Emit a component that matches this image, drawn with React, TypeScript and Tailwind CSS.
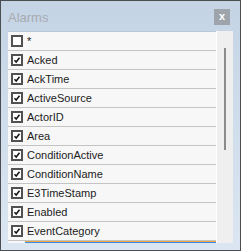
import React from "react"

const fields = [
  "*",
  "Acked",
  "AckTime",
  "ActiveSource",
  "ActorID",
  "Area",
  "ConditionActive",
  "ConditionName",
  "E3TimeStamp",
  "Enabled",
  "EventCategory",
]

function Check({ checked }: { checked: boolean }) {
  return (
    <div className="w-[12px] h-[12px] border-2 border-[#515151] bg-white flex items-center justify-center">
      {checked && (
        <svg width="8" height="8" viewBox="0 0 8 8">
          <path d="M1.5 4.2 L3.2 6 L6.5 1.8" fill="none" stroke="#111" strokeWidth="1.5" />
        </svg>
      )}
    </div>
  )
}

export default function App() {
  return (
    <div className="w-[241px] h-[251px] border border-[#4b4d50] bg-gradient-to-b from-[#c4d4e5] to-[#dce6f2] flex flex-col font-['Liberation_Sans',Arial,sans-serif]">
      <div className="h-[30px] flex items-center justify-between pl-[7px] pr-[10px] pt-[2px]">
        <span className="text-[13px] text-[#a6abb1] leading-none">Alarms</span>
        <div className="w-[16px] h-[16px] bg-[#9da4ab] flex items-center justify-center text-white text-[11px] font-bold leading-none pb-[2px]">
          x
        </div>
      </div>
      <div className="ml-[7px] w-[225px] h-[212px] flex">
        <div className="w-[208px] border-t border-[#b9c7d6] bg-[#f7f7f7] flex flex-col">
          {fields.map((f, i) => (
            <div key={f} className="h-[19px] shrink-0 flex border-b border-[#c4c4c4]">
              <div className="w-[18px] border-r border-[#fdfdfd] flex items-center pl-[3px]">
                <Check checked={i > 0} />
              </div>
              <span className="pl-[1px] text-[11px] leading-[18px] text-[#1c1c1c]">{f}</span>
            </div>
          ))}
          <div className="flex">
            <div className="w-[17px]" />
            <div className="flex-1">
              <div className="h-px bg-[#f0a23c]" />
              <div className="h-px bg-[#3a8de4]" />
            </div>
          </div>
        </div>
        <div className="w-[17px] border-l border-white bg-[#efefef] pt-[17px] pl-[7px]">
          <div className="w-[2px] h-[102px] bg-[#8b8b8b]" />
        </div>
      </div>
    </div>
  )
}
